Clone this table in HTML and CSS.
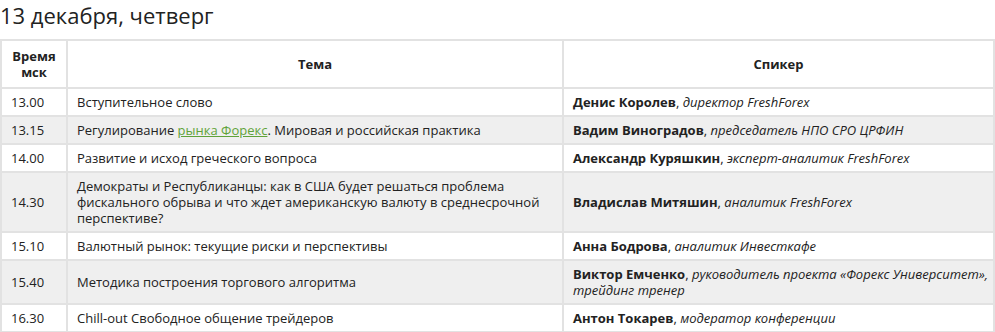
FILE: index.html
```html
<!DOCTYPE html>
<html lang="ru">
<head>
<meta charset="utf-8">
<title>13 декабря, четверг</title>
<link rel="stylesheet" href="styles.css">
</head>
<body>
<h2 class="day-title">13 декабря, четверг</h2>
<table class="schedule">
  <colgroup>
    <col class="c-time">
    <col class="c-topic">
    <col class="c-speaker">
  </colgroup>
  <thead>
    <tr>
      <th>Время<br>мск</th>
      <th>Тема</th>
      <th>Спикер</th>
    </tr>
  </thead>
  <tbody>
    <tr>
      <td>13.00</td>
      <td>Вступительное слово</td>
      <td><b>Денис Королев</b>, <i>директор FreshForex</i></td>
    </tr>
    <tr class="alt">
      <td>13.15</td>
      <td>Регулирование <a href="#" class="link">рынка Форекс</a>. Мировая и российская практика</td>
      <td><b>Вадим Виноградов</b>, <i>председатель НПО СРО ЦРФИН</i></td>
    </tr>
    <tr>
      <td>14.00</td>
      <td>Развитие и исход греческого вопроса</td>
      <td><b>Александр Куряшкин</b>, <i>эксперт-аналитик FreshForex</i></td>
    </tr>
    <tr class="alt">
      <td>14.30</td>
      <td>Демократы и Республиканцы: как в США будет решаться проблема фискального обрыва и что ждет американскую валюту в среднесрочной перспективе?</td>
      <td><b>Владислав Митяшин</b>, <i>аналитик FreshForex</i></td>
    </tr>
    <tr>
      <td>15.10</td>
      <td>Валютный рынок: текущие риски и перспективы</td>
      <td><b>Анна Бодрова</b>, <i>аналитик Инвесткафе</i></td>
    </tr>
    <tr class="alt">
      <td>15.40</td>
      <td>Методика построения торгового алгоритма</td>
      <td><b>Виктор Емченко</b>, <i>руководитель проекта «Форекс Университет»,<br>трейдинг тренер</i></td>
    </tr>
    <tr>
      <td>16.30</td>
      <td>Chill-out Свободное общение трейдеров</td>
      <td><b>Антон Токарев</b>, <i>модератор конференции</i></td>
    </tr>
  </tbody>
</table>
</body>
</html>
```

FILE: styles.css
```css
html, body {
  margin: 0;
  padding: 0;
  background: #fff;
}
body {
  font-family: "Open Sans", "Liberation Sans", sans-serif;
  color: #222;
}
.day-title {
  margin: 0;
  padding: 0;
  height: 39px;
  font-size: 22px;
  font-weight: 400;
  line-height: 30px;
  color: #222;
  box-sizing: border-box;
}
.schedule {
  border-collapse: collapse;
  width: 993px;
  table-layout: fixed;
  font-size: 13px;
  line-height: 16px;
}
.c-time { width: 66px; }
.c-topic { width: 496px; }
.c-speaker { width: 431px; }
.schedule th,
.schedule td {
  border: 2px solid #e2e2e2;
  padding: 5px 4px 5px 9px;
  vertical-align: middle;
  text-align: left;
}
.schedule th {
  text-align: center;
  font-weight: 700;
  padding: 7px 4px;
}
.schedule tr.alt td {
  background: #efefef;
}
.schedule b {
  font-weight: 700;
}
.link {
  color: #5fa33a;
  text-decoration: underline;
}
```
